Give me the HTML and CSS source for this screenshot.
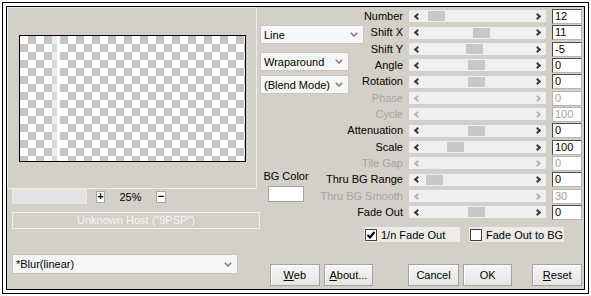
FILE: index.html
```html
<!DOCTYPE html>
<html lang="en">
<head>
    <meta charset="UTF-8">
    <title>Blur(linear)</title>
    <link rel="stylesheet" href="styles.css">
</head>
<body>
    <div class="screen">
        <div class="dialog">
            <div class="left">
                <div class="preview-group">
                    <div class="preview"></div>
                </div>
                <div class="zoom-row">
                    <div class="zoom-field"></div>
                    <div class="tiny plus">+</div>
                    <span class="zoom-value">25%</span>
                    <div class="tiny minus">&minus;</div>
                </div>
                <div class="host">Unknown Host ("9PSP")</div>
                <div class="select blur">
                    <span>*Blur(linear)</span>
                    <svg width="8" height="5" viewBox="0 0 8 5"><polyline points="0.8,0.8 4,4 7.2,0.8" fill="none" stroke="#808080" stroke-width="1.6"/></svg>
                </div>
            </div>

            <div class="right">
                <div class="controls">
                    <div class="middle">
                        <div class="select line">
                            <span>Line</span>
                            <svg width="8" height="5" viewBox="0 0 8 5"><polyline points="0.8,0.8 4,4 7.2,0.8" fill="none" stroke="#808080" stroke-width="1.6"/></svg>
                        </div>
                        <div class="select wrap">
                            <span>Wraparound</span>
                            <svg width="8" height="5" viewBox="0 0 8 5"><polyline points="0.8,0.8 4,4 7.2,0.8" fill="none" stroke="#808080" stroke-width="1.6"/></svg>
                        </div>
                        <div class="select blend">
                            <span>(Blend Mode)</span>
                            <svg width="8" height="5" viewBox="0 0 8 5"><polyline points="0.8,0.8 4,4 7.2,0.8" fill="none" stroke="#808080" stroke-width="1.6"/></svg>
                        </div>
                        <div class="bg-color">
                            <span>BG Color</span>
                            <div class="swatch"></div>
                        </div>
                    </div>

                    <div class="table">
                        <span class="label">Number</span>
                        <div class="slider"><i class="arr-l"></i><b class="thumb" style="left: 19px"></b><i class="arr-r"></i></div>
                        <div class="num">12</div>

                        <span class="label">Shift X</span>
                        <div class="slider"><i class="arr-l"></i><b class="thumb" style="left: 64px"></b><i class="arr-r"></i></div>
                        <div class="num">11</div>

                        <span class="label">Shift Y</span>
                        <div class="slider"><i class="arr-l"></i><b class="thumb" style="left: 57px"></b><i class="arr-r"></i></div>
                        <div class="num">-5</div>

                        <span class="label">Angle</span>
                        <div class="slider"><i class="arr-l"></i><b class="thumb" style="left: 59px"></b><i class="arr-r"></i></div>
                        <div class="num">0</div>

                        <span class="label">Rotation</span>
                        <div class="slider"><i class="arr-l"></i><b class="thumb" style="left: 59px"></b><i class="arr-r"></i></div>
                        <div class="num">0</div>

                        <span class="label off">Phase</span>
                        <div class="slider off"><i class="arr-l"></i><i class="arr-r"></i></div>
                        <div class="num off">0</div>

                        <span class="label off">Cycle</span>
                        <div class="slider off"><i class="arr-l"></i><i class="arr-r"></i></div>
                        <div class="num off">100</div>

                        <span class="label">Attenuation</span>
                        <div class="slider"><i class="arr-l"></i><b class="thumb" style="left: 59px"></b><i class="arr-r"></i></div>
                        <div class="num">0</div>

                        <span class="label">Scale</span>
                        <div class="slider"><i class="arr-l"></i><b class="thumb" style="left: 38px"></b><i class="arr-r"></i></div>
                        <div class="num">100</div>

                        <span class="label off">Tile Gap</span>
                        <div class="slider off"><i class="arr-l"></i><i class="arr-r"></i></div>
                        <div class="num off">0</div>

                        <span class="label">Thru BG Range</span>
                        <div class="slider"><i class="arr-l"></i><b class="thumb" style="left: 17px"></b><i class="arr-r"></i></div>
                        <div class="num">0</div>

                        <span class="label off">Thru BG Smooth</span>
                        <div class="slider off"><i class="arr-l"></i><i class="arr-r"></i></div>
                        <div class="num off">30</div>

                        <span class="label">Fade Out</span>
                        <div class="slider"><i class="arr-l"></i><b class="thumb" style="left: 59px"></b><i class="arr-r"></i></div>
                        <div class="num">0</div>
                    </div>
                </div>

                <div class="checks">
                    <label class="check first">
                        <span class="box"><svg width="10" height="10" viewBox="0 0 10 10"><polyline points="1.5,5 4,7.5 8.5,2" fill="none" stroke="#000" stroke-width="2"/></svg></span>
                        1/n Fade Out
                    </label>
                    <label class="check second">
                        <span class="box"></span>
                        Fade Out to BG
                    </label>
                </div>

                <div class="buttons">
                    <button class="btn web"><u>W</u>eb</button>
                    <button class="btn about"><u>A</u>bout...</button>
                    <button class="btn cancel">Cancel</button>
                    <button class="btn ok">OK</button>
                    <button class="btn reset"><u>R</u>eset</button>
                </div>
            </div>
        </div>
    </div>
</body>
</html>
```

FILE: styles.css
```css
body { margin: 0; width: 591px; height: 296px; overflow: hidden; background: #fff; font-family: "Liberation Sans", Arial, sans-serif; font-size: 11px; color: #000; }
* { box-sizing: border-box; }

.screen { margin: 2px; width: 587px; height: 292px; border: 1px solid #000; padding: 3px; background: #fff; }
.dialog { width: 579px; height: 284px; border: 1px solid #000; background: #d4d0c8; display: flex; }

/* left side: preview */
.left { width: 253px; display: flex; flex-direction: column; }
.preview-group { width: 250px; height: 182px; border: 1px solid #eeece7; }
.preview {
    margin: 27px 0 0 11px; width: 227px; height: 127px; border: 1px solid #000;
    background:
        linear-gradient(to right, transparent 32px, rgba(225,225,225,.7) 32px, rgba(225,225,225,.7) 37px, rgba(255,255,255,.95) 37px, rgba(255,255,255,.95) 40px, transparent 40px),
        conic-gradient(#c3c3c3 25%, #fff 0 50%, #c3c3c3 0 75%, #fff 0);
    background-size: auto, 16px 16px;
}
.zoom-row { height: 15px; display: flex; align-items: center; padding-left: 5px; }
.zoom-field { width: 75px; height: 15px; background: #e4e3e1; border: 1px solid #e9e8e5; }
.tiny { width: 9px; height: 12px; background: #fff; border: 1px solid #a8a8a8; font-size: 11px; font-weight: bold; line-height: 9px; text-align: center; }
.plus { margin-left: 9px; }
.minus { width: 10px; }
.zoom-value { width: 51px; text-align: center; }
.host { margin: 8px 0 0 5px; width: 248px; height: 17px; border: 1px solid #f0efec; color: #f4f4f4; text-align: center; line-height: 15px; }

.select { display: flex; align-items: center; justify-content: space-between; height: 19px; padding: 0 5px 0 3px; background: #f6f6f6; border: 1px solid #c6c6c6; }
.blur { margin: 25px 0 0 5px; width: 226px; height: 20px; }

/* right side: controls */
.right { width: 322px; display: flex; flex-direction: column; }
.controls { display: grid; margin-top: 1px; }
.controls > * { grid-area: 1 / 1; }
.middle { display: flex; flex-direction: column; align-items: flex-start; }
.line { margin-top: 17px; width: 104px; }
.wrap { margin-top: 8px; width: 89px; }
.blend { margin-top: 4px; width: 89px; }
.bg-color { margin-top: 76px; width: 52px; display: flex; flex-direction: column; align-items: center; }
.bg-color span { line-height: 13px; }
.swatch { margin-top: 3px; width: 36px; height: 16px; background: #fff; border: 1px solid #a4a4a4; }

.table { display: grid; grid-template-columns: 143px 137px 30px; grid-template-rows: 16px 17px 16px 16px 17px 16px 16px 17px 16px 16px 17px 16px 16px; column-gap: 6px; align-items: center; }
.label { text-align: right; white-space: nowrap; line-height: 13px; }
.label.off { color: #a4a4a4; }
.slider { position: relative; height: 12px; background: #efefef; display: flex; align-items: center; justify-content: space-between; padding: 0 5px; }
.arr-l, .arr-r { width: 5px; height: 5px; border-left: 2px solid #3c3c3c; border-bottom: 2px solid #3c3c3c; }
.arr-l { transform: rotate(45deg); margin-left: 1px; }
.arr-r { transform: rotate(-135deg); margin-right: 1px; }
.slider.off .arr-l, .slider.off .arr-r { border-color: #b8b8b8; }
.thumb { position: absolute; top: 1px; width: 17px; height: 10px; background: #c8c8c8; }
.num { height: 15px; border: 1px solid; border-color: #4a4a4a #b4b4b4 #b4b4b4 #4a4a4a; background: #fff; line-height: 13px; padding-left: 2px; }
.num.off { border-color: #b4b4b4; color: #a4a4a4; }

.checks { display: flex; margin: 7px 0 0 104px; }
.check { display: flex; align-items: center; height: 15px; background: #ecebe8; padding-left: 1px; }
.first { width: 96px; }
.second { width: 95px; margin-left: 9px; }
.box { width: 12px; height: 12px; margin-right: 4px; background: #fff; border: 1px solid #404040; display: flex; align-items: center; justify-content: center; }

.buttons { display: flex; margin-top: 22px; }
.btn { width: 50px; height: 22px; padding: 0; font-family: inherit; font-size: 11px; color: #000; background: linear-gradient(#f5f5f5, #e6e6e6); border: 1px solid #a2a2a2; box-shadow: inset 1px 1px #fff; }
.btn u { text-decoration: underline; }
.web { margin-left: 10px; }
.about { margin-left: 4px; }
.cancel { margin-left: 35px; width: 51px; }
.ok { margin-left: 4px; }
.reset { margin-left: 20px; }
```
